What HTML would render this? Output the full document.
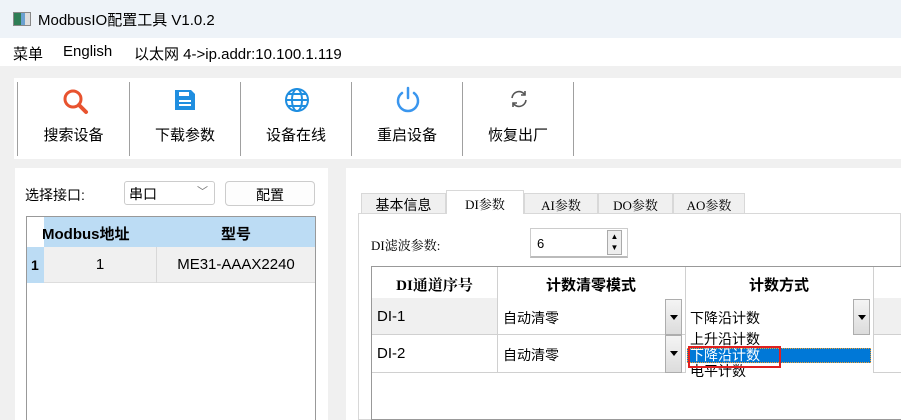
<!DOCTYPE html>
<html><head><meta charset="utf-8"><style>
*{margin:0;padding:0;box-sizing:border-box}
body{width:901px;height:420px;overflow:hidden;background:#f0f0f0;font-family:"Liberation Sans","Noto Sans CJK SC",sans-serif;font-size:14px;color:#000;position:relative}
.a{position:absolute}
.tb{text-align:center;font-size:15px}
.sep{position:absolute;top:82px;width:1px;height:74px;background:#a0a0a0}
.arrow{position:absolute;width:17px;background:linear-gradient(#f4f4f4,#dcdcdc);border:1px solid #adadad}
.arrow:after{content:"";position:absolute;left:4px;top:15px;border-left:4px solid transparent;border-right:4px solid transparent;border-top:5px solid #000}
.tab{position:absolute;top:193px;height:21px;background:#f0f0f0;border:1px solid #d8d8d8;text-align:center;padding-top:1px;font-size:13px;font-family:'Liberation Serif','Noto Serif CJK SC',serif}
</style></head><body>
<div class="a" style="left:0;top:0;width:901px;height:38px;background:#eef3f8"></div>
<div class="a" style="left:13px;top:12px;width:18px;height:14px;border:1px solid #888;background:linear-gradient(90deg,#2e7d55 0 45%,#6aa0d0 45% 70%,#ddd 70%)"></div>
<div class="a" style="left:38px;top:9px;font-size:15px">ModbusIO配置工具 V1.0.2</div>
<div class="a" style="left:0;top:38px;width:901px;height:28px;background:#fff"></div>
<div class="a" style="left:13px;top:43px;font-size:15px">菜单</div>
<div class="a" style="left:63px;top:43px;font-size:15px">English</div>
<div class="a" style="left:134px;top:43px;font-size:15px">以太网 4-&gt;ip.addr:10.100.1.119</div>
<div class="a" style="left:14px;top:78px;width:887px;height:81px;background:#fff"></div>
<div class="sep" style="left:17px"></div><div class="sep" style="left:129px"></div><div class="sep" style="left:240px"></div><div class="sep" style="left:351px"></div><div class="sep" style="left:462px"></div><div class="sep" style="left:573px"></div>
<svg class="a" style="left:60px;top:86px" width="30" height="30" viewBox="0 0 30 30"><circle cx="13" cy="13" r="8" fill="none" stroke="#e8532f" stroke-width="3"/><line x1="19" y1="19" x2="26" y2="26" stroke="#e8532f" stroke-width="4" stroke-linecap="round"/></svg>
<svg class="a" style="left:172px;top:87px" width="26" height="26" viewBox="0 0 26 26"><path d="M3 3h16l4 4v16H3z" fill="#1f8ee0"/><rect x="7" y="13" width="12" height="2" fill="#fff"/><rect x="7" y="17" width="12" height="2" fill="#fff"/><rect x="7" y="5" width="10" height="4" fill="#fff"/></svg>
<svg class="a" style="left:283px;top:86px" width="28" height="28" viewBox="0 0 28 28" fill="none" stroke="#1f8ee0" stroke-width="2"><circle cx="14" cy="14" r="11"/><ellipse cx="14" cy="14" rx="5" ry="11"/><line x1="3" y1="14" x2="25" y2="14"/><line x1="5" y1="8" x2="23" y2="8"/><line x1="5" y1="20" x2="23" y2="20"/></svg>
<svg class="a" style="left:393px;top:85px" width="30" height="30" viewBox="0 0 30 30" fill="none" stroke="#3a96ee" stroke-width="2.5" stroke-linecap="round"><path d="M9 8a10 10 0 1 0 12 0"/><line x1="15" y1="3" x2="15" y2="13"/></svg>
<svg class="a" style="left:509px;top:89px" width="20" height="20" viewBox="0 0 20 20" fill="none" stroke="#555" stroke-width="1.6"><path d="M3 9a7 7 0 0 1 13-3M17 11a7 7 0 0 1-13 3"/><path d="M16 2v4h-4M4 18v-4h4"/></svg>
<div class="a tb" style="left:18px;top:124px;width:111px">搜索设备</div>
<div class="a tb" style="left:130px;top:124px;width:110px">下载参数</div>
<div class="a tb" style="left:241px;top:124px;width:110px">设备在线</div>
<div class="a tb" style="left:352px;top:124px;width:110px">重启设备</div>
<div class="a tb" style="left:463px;top:124px;width:110px">恢复出厂</div>
<div class="a" style="left:15px;top:168px;width:313px;height:252px;background:#fff"></div>
<div class="a" style="left:25px;top:185px">选择接口:</div>
<div class="a" style="left:124px;top:181px;width:91px;height:24px;border:1px solid #ccc;border-radius:3px;background:#fff;padding:2px 4px">串口<span style="position:absolute;right:6px;top:1px;color:#777;font-size:11px">﹀</span></div>
<div class="a" style="left:225px;top:181px;width:90px;height:25px;border:1px solid #ccc;border-radius:4px;background:#fdfdfd;text-align:center;padding-top:3px">配置</div>
<div class="a" style="left:26px;top:216px;width:290px;height:204px;border:1px solid #999;border-bottom:none;background:#fff"></div>
<div class="a" style="left:44px;top:217px;width:271px;height:30px;background:#bcdcf4"></div>
<div class="a" style="left:27px;top:247px;width:17px;height:36px;background:#bcdcf4;font-weight:bold;padding:10px 0 0 4px">1</div>
<div class="a" style="left:44px;top:247px;width:271px;height:36px;background:#f0f0f0;border-bottom:1px solid #ddd"></div>
<div class="a" style="left:156px;top:247px;width:1px;height:36px;background:#d8d8d8"></div>
<div class="a" style="left:42px;top:223px;font-weight:bold;font-size:15px">Modbus地址</div>
<div class="a" style="left:156px;top:223px;width:160px;text-align:center;font-weight:bold;font-size:15px">型号</div>
<div class="a" style="left:44px;top:256px;width:112px;text-align:center;font-size:15px">1</div>
<div class="a" style="left:156px;top:256px;width:160px;text-align:center;font-size:15px">ME31-AAAX2240</div>
<div class="a" style="left:346px;top:168px;width:555px;height:252px;background:#fff"></div>
<div class="a" style="left:358px;top:213px;width:543px;height:207px;border:1px solid #d8d8d8;background:#fff"></div>
<div class="tab" style="left:361px;width:85px;font-size:14px;font-family:'Liberation Sans','Noto Sans CJK SC',sans-serif">基本信息</div>
<div class="tab" style="left:446px;top:190px;height:24px;width:78px;background:#fff;border-bottom:none;padding-top:3px">DI参数</div>
<div class="tab" style="left:524px;width:74px">AI参数</div>
<div class="tab" style="left:598px;width:75px">DO参数</div>
<div class="tab" style="left:673px;width:72px">AO参数</div>
<div class="a" style="left:371px;top:235px;font-size:13px;font-family:'Liberation Serif','Noto Serif CJK SC',serif">DI滤波参数:</div>
<div class="a" style="left:530px;top:228px;width:98px;height:30px;border:1px solid #ccc;border-bottom:2px solid #bbb;background:#fff;padding:7px 0 0 6px;font-size:13px">6</div>
<div class="a" style="left:607px;top:230px;width:15px;height:25px;border:1px solid #aaa;background:#eee;font-size:8px;text-align:center;line-height:11px">▲<br>▼</div>
<div class="a" style="left:371px;top:266px;width:530px;height:154px;border:1px solid #999;border-right:none;background:#fff"></div>
<div class="a" style="left:372px;top:298px;width:125px;height:37px;background:#f0f0f0"></div>
<div class="a" style="left:873px;top:298px;width:28px;height:37px;background:#f0f0f0"></div>
<div class="a" style="left:372px;top:334px;width:529px;height:1px;background:#d0d0d0"></div>
<div class="a" style="left:372px;top:372px;width:529px;height:1px;background:#d0d0d0"></div>
<div class="a" style="left:497px;top:267px;width:1px;height:106px;background:#d0d0d0"></div>
<div class="a" style="left:685px;top:267px;width:1px;height:106px;background:#d0d0d0"></div>
<div class="a" style="left:873px;top:267px;width:1px;height:106px;background:#d0d0d0"></div>
<div class="a" style="left:372px;top:274px;width:125px;text-align:center;font-weight:bold;font-size:15px;font-family:'Liberation Serif','Noto Serif CJK SC',serif">DI通道序号</div>
<div class="a" style="left:497px;top:274px;width:188px;text-align:center;font-weight:bold;font-size:15px">计数清零模式</div>
<div class="a" style="left:685px;top:274px;width:188px;text-align:center;font-weight:bold;font-size:15px">计数方式</div>
<div class="a" style="left:377px;top:308px;font-size:15px">DI-1</div>
<div class="a" style="left:377px;top:345px;font-size:15px">DI-2</div>
<div class="a" style="left:503px;top:308px;font-size:14px">自动清零</div>
<div class="a" style="left:503px;top:345px;font-size:14px">自动清零</div>
<div class="arrow" style="left:665px;top:299px;height:36px"></div>
<div class="arrow" style="left:665px;top:335px;height:38px"></div>
<div class="a" style="left:686px;top:299px;width:187px;height:36px;background:#fff"></div>
<div class="a" style="left:690px;top:308px;font-size:14px">下降沿计数</div>
<div class="arrow" style="left:853px;top:299px;height:36px"></div>
<div class="a" style="left:686px;top:335px;width:187px;height:46px;background:#fff"></div>
<div class="a" style="left:687px;top:348px;width:184px;height:15px;background:#0078d7;border:1px dotted #f0a030"></div>
<div class="a" style="left:690px;top:329px;font-size:14px">上升沿计数</div>
<div class="a" style="left:690px;top:345px;font-size:14px;color:#fff">下降沿计数</div>
<div class="a" style="left:690px;top:361px;font-size:14px">电平计数</div>
<div class="a" style="left:688px;top:346px;width:93px;height:22px;border:2px solid #e02020"></div>
</body></html>
